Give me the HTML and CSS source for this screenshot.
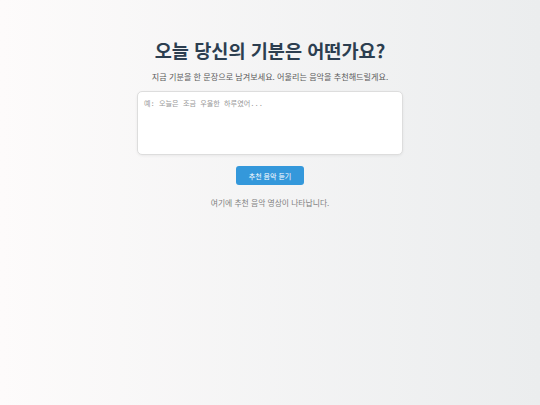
FILE: index.html
```html
<!DOCTYPE html>
<html lang="ko">
<head>
<meta charset="utf-8">
<title>오늘 당신의 기분은 어떤가요?</title>
<link rel="stylesheet" href="styles.css">
</head>
<body>
<main class="page">
  <h1 class="title">오늘 당신의 기분은 어떤가요?</h1>
  <p class="subtitle">지금 기분을 한 문장으로 남겨보세요. 어울리는 음악을 추천해드릴게요.</p>
  <textarea class="mood-input" placeholder="예: 오늘은 조금 우울한 하루였어..."></textarea>
  <button class="submit">추천 음악 듣기</button>
  <p class="result">여기에 추천 음악 영상이 나타납니다.</p>
</main>
</body>
</html>
```
FILE: styles.css
```css
html, body {
  margin: 0;
  height: 100%;
}
body {
  background: linear-gradient(90deg, #fdfbfb 0%, #ebedee 100%);
  font-family: "Noto Sans CJK KR", "Noto Sans", sans-serif;
}
.page {
  display: flex;
  flex-direction: column;
  align-items: center;
  padding-top: 40px;
}
.title {
  margin: 0;
  font-size: 18.6px;
  line-height: 20px;
  font-weight: 700;
  color: #2c3e50;
}
.subtitle {
  margin: 11px 0 0;
  font-size: 8.1px;
  line-height: 11px;
  color: #5a5a5a;
}
.mood-input {
  margin-top: 9px;
  box-sizing: border-box;
  width: 266px;
  height: 64px;
  padding: 6px;
  border: 1px solid #dddddd;
  border-radius: 5px;
  background: #fff;
  font-family: "DejaVu Sans Mono", "Noto Sans CJK KR", monospace;
  font-size: 7.1px;
  resize: none;
  box-shadow: 0 1px 3px rgba(0,0,0,0.06);
}
.mood-input::placeholder {
  color: #999;
}
.submit {
  margin-top: 11px;
  width: 68px;
  height: 19px;
  padding: 0;
  border: none;
  border-radius: 3px;
  background: #3498db;
  color: #fff;
  font-family: "Noto Sans CJK KR", sans-serif;
  font-size: 7px;
}
.result {
  margin: 12px 0 0;
  font-size: 7.8px;
  line-height: 11px;
  color: #808080;
}
```
